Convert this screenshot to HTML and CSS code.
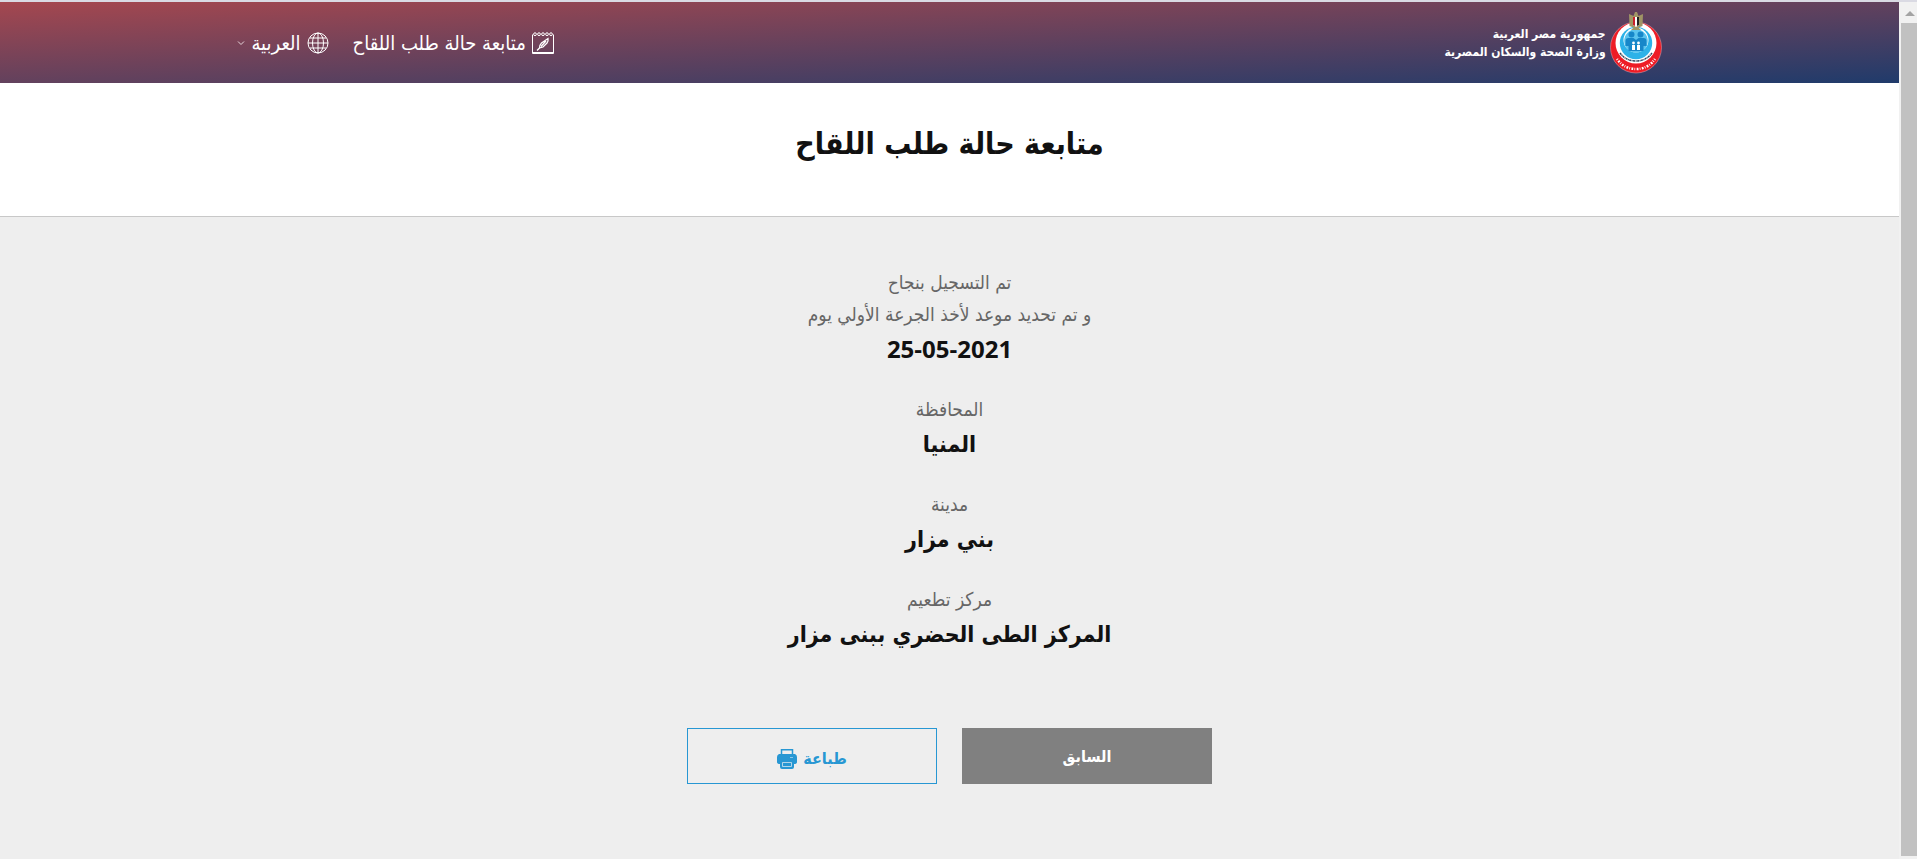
FILE: index.html
```html
<!DOCTYPE html>
<html lang="ar" dir="rtl">
<head>
<meta charset="utf-8">
<title>متابعة حالة طلب اللقاح</title>
<link rel="stylesheet" href="styles.css">
</head>
<body>
<div class="shell">
  <div class="page">
    <header class="header">
      <div class="container">
        <a class="brand" href="#">
          <svg class="logo" viewBox="0 0 52 62" aria-hidden="true">
            <circle cx="26" cy="35.500" r="25.500" fill="#ee1c25" stroke="#e9a9b3" stroke-width="0.500"/>
            <circle cx="26" cy="31" r="20.500" fill="#fff"/>
            <circle cx="26" cy="31" r="16.200" fill="#2cb2e8"/>
            <circle cx="26" cy="28" r="12.500" fill="#fff"/>
            <circle cx="26" cy="29" r="11.800" fill="#5cc4ee"/>
            <g fill="#1787c9">
              <circle cx="21.500" cy="22.500" r="3"/>
              <circle cx="30.500" cy="22.500" r="3"/>
              <path d="M15.500 34v-5q0-3 3-3h5l2.500 2 2.500-2h5q3 0 3 3v5h-3v5h-15v-5z"/>
            </g>
            <g fill="#fff">
              <circle cx="23.500" cy="31" r="1.400"/>
              <circle cx="28.500" cy="31" r="1.400"/>
              <path d="M22 33h3v5h-3zM27 33h3v5h-3z"/>
            </g>
            <path d="M10 41q6 8 16 8t16-8" fill="none" stroke="#34495e" stroke-width="1.500" stroke-dasharray="2 .5 1 .4"/>
            <path d="M7 47q7 10 19 10t19-10" fill="none" stroke="#fff" stroke-width="2.500" stroke-dasharray=".8 1.400 1.800 1.200"/>
            <path d="M19 2l4.500 2L25 0q1-1 2 0l1.500 4L33 2l-.5 12-4 1.500 2.500 2.500H21l2.500-2.500-4-1.500z" fill="#a09565"/>
            <path d="M23 5h6v8l-3 2-3-2z" fill="#fff"/>
            <path d="M23 5h2v9l-2-1z" fill="#c9202b"/>
            <path d="M27 5h2v8l-2 1z" fill="#222"/>
          </svg>
          <span class="brand-text">جمهورية مصر العربية<br>وزارة الصحة والسكان المصرية</span>
        </a>
        <nav class="nav">
          <a class="nav-link" href="#">
            <svg class="nav-icon" viewBox="0 0 22 22" fill="none" stroke="#fff" aria-hidden="true">
              <path d="M.5 2.500v19h21v-19M.5 20.500h21"/>
              <g>
                <circle cx="3" cy="2.200" r="1.400"/><circle cx="7" cy="2.200" r="1.400"/>
                <circle cx="11" cy="2.200" r="1.400"/><circle cx="15" cy="2.200" r="1.400"/>
                <circle cx="19" cy="2.200" r="1.400"/>
              </g>
              <path d="M7.500 16q0-3 2-5l6.500-4.500Q16.500 9 15 11l-4 4-3.500 1zM9 14.500l5-5.500M5 18.500L7.500 16" stroke-width="1.300"/>
            </svg>
            <span>متابعة حالة طلب اللقاح</span>
          </a>
          <button class="nav-link" type="button">
            <svg class="nav-icon" viewBox="0 0 22 22" fill="none" stroke="#fff" aria-hidden="true">
              <circle cx="11" cy="11" r="10"/>
              <ellipse cx="11" cy="11" rx="5.500" ry="10"/>
              <path d="M11 1v20M1 11h20M3 6h16M3 16h16"/>
            </svg>
            <span>العربية</span>
            <svg class="caret" viewBox="0 0 8 8" fill="none" stroke="#e5d5db" aria-hidden="true"><path d="M1 2.500l3 3 3-3"/></svg>
          </button>
        </nav>
      </div>
    </header>
    <section class="title-bar"><h1>متابعة حالة طلب اللقاح</h1></section>
    <main class="details">
      <div class="item">
        <p class="label">تم التسجيل بنجاح</p>
        <p class="label">و تم تحديد موعد لأخذ الجرعة الأولي يوم</p>
        <p class="value date" dir="ltr">25-05-2021</p>
      </div>
      <div class="item"><p class="label">المحافظة</p><p class="value">المنيا</p></div>
      <div class="item"><p class="label">مدينة</p><p class="value">بني مزار</p></div>
      <div class="item"><p class="label">مركز تطعيم</p><p class="value">المركز الطى الحضري ببنى مزار</p></div>
      <div class="actions">
        <button class="btn btn-back" type="button">السابق</button>
        <button class="btn btn-print" type="button">
          <span>طباعة</span>
          <svg class="print-icon" viewBox="0 0 20 20" aria-hidden="true">
            <path d="M4.500 5.500V.8h11v4.700" fill="none" stroke="#2797d3" stroke-width="1.500"/>
            <path d="M2 5h16q2 1 2 3v5q0 2-3 2v3q0 2-2 2H5q-2 0-2-2v-3q-3 0-3-2V8q0-2 2-3z" fill="#2797d3"/>
            <path d="M5.500 13.500h9v4h-9z" fill="none" stroke="#d5e6ef" stroke-width="0.800"/>
            <path d="M13 8.500h3" stroke="#8ec7e6"/>
          </svg>
        </button>
      </div>
    </main>
  </div>
  <div class="scrollbar" aria-hidden="true">
    <svg class="arrow" viewBox="0 0 10 5"><path d="M0 5l5-5 5 5z" fill="#a3a3a3"/></svg>
    <div class="thumb"></div>
  </div>
</div>
</body>
</html>
```
FILE: styles.css
```css
* { box-sizing: border-box; }
body {
  margin: 0;
  background: #eee;
  color: #111;
  font-family: "DejaVu Sans Condensed", "DejaVu Sans", sans-serif;
}
h1, p { margin: 0; }
button { font: inherit; cursor: pointer; }
.shell {
  display: flex;
  direction: ltr;
  min-height: 100vh;
  border-top: 2px solid #dadae3;
}
.page { flex: 1; direction: rtl; }
.header {
  background: linear-gradient(to bottom right, #a5474f, #203b6b);
  color: #fff;
}
.container {
  display: flex;
  justify-content: space-between;
  width: 75%;
  margin: 0 auto;
  height: 81px;
}
.brand {
  display: flex;
  align-items: center;
  gap: 4px;
  color: #fff;
  text-decoration: none;
}
.logo { width: 52px; height: 62px; }
.brand-text { font-size: 12px; font-weight: bold; line-height: 18px; }
.nav { display: flex; align-items: center; gap: 24px; }
.nav-link {
  display: flex;
  align-items: center;
  gap: 6px;
  padding: 0;
  border: 0;
  background: none;
  color: #fff;
  font-size: 20px;
  text-decoration: none;
}
.nav-icon { width: 22px; height: 22px; }
.caret { width: 8px; height: 8px; }
.title-bar {
  height: 134px;
  padding-top: 37px;
  background: #fff;
  border-bottom: 1px solid #c8c8c8;
  text-align: center;
}
h1 { font-size: 30px; line-height: 48px; }
.details { padding: 49px 0 72px; text-align: center; }
.item { margin-bottom: 25px; }
.label { color: #666; font-size: 19px; line-height: 32px; }
.value { font-size: 23px; font-weight: bold; line-height: 38px; }
.date { font-family: "Open Sans", sans-serif; font-size: 24px; }
.actions {
  display: flex;
  justify-content: center;
  gap: 25px;
  margin-top: 75px;
}
.btn {
  display: flex;
  align-items: center;
  justify-content: center;
  gap: 6px;
  width: 250px;
  height: 56px;
  font-size: 16px;
  font-weight: bold;
}
.btn-back { background: #808080; border: 0; color: #fff; }
.btn-print { padding-top: 6px; background: transparent; border: 1px solid #2797d3; color: #2797d3; }
.print-icon { width: 20px; height: 20px; }
.scrollbar {
  display: flex;
  flex-direction: column;
  width: 18px;
  padding: 9px 0 3px 2px;
  background: #f1f1f1;
}
.arrow { width: 10px; height: 5px; margin: 0 4px 7px; }
.thumb { flex: 1; background: #c1c1c1; }
```
